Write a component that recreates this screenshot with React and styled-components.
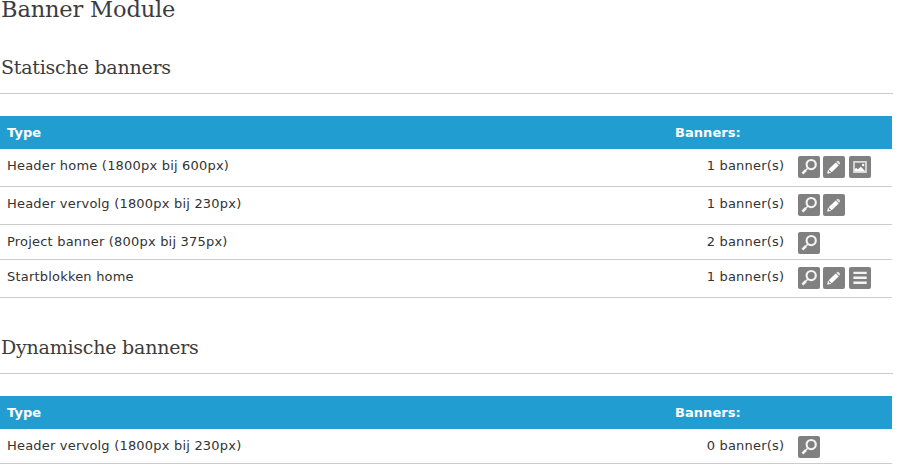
import styled, { createGlobalStyle } from "styled-components";

const GlobalStyle = createGlobalStyle`
  body {
    margin: 0;
    background: #fff;
    color: #333;
    font-family: Verdana, "DejaVu Sans", sans-serif;
    font-size: 13px;
  }
`;

const Page = styled.main`
  width: 893px;
`;

const PageTitle = styled.h1`
  margin: 0;
  padding-left: 1px;
  height: 24px;
  line-height: 18px;
  color: #3c3c3c;
  font-family: "DejaVu Serif", serif;
  font-size: 22.5px;
  font-weight: 400;
  letter-spacing: -0.15px;
`;

const Section = styled.section`
  padding-top: ${(props) => props.$space}px;
`;

const SectionTitle = styled.h2`
  margin: 0 0 22px;
  padding-left: 1px;
  height: 41px;
  line-height: 30px;
  border-bottom: 1px solid #ccc;
  color: #3c3c3c;
  font-family: "DejaVu Serif", serif;
  font-size: 19px;
  font-weight: 400;
  letter-spacing: -0.22px;
`;

const Table = styled.div`
  width: 892px;
`;

const Row = styled.div`
  display: grid;
  grid-template-columns: 668px 130px 1fr;
  box-sizing: border-box;
  height: ${(props) => (props.$compact ? 35 : 38)}px;
  border-bottom: 1px solid #ccc;
  letter-spacing: 0.2px;
`;

const HeadRow = styled(Row)`
  height: 33px;
  border-bottom: 0;
  background: #219dd2;
  color: #fff;
  font-weight: 700;
  letter-spacing: 0.05px;
`;

const Cell = styled.div`
  padding: 7px 0 0 7px;
  line-height: 20px;
`;

const CountCell = styled(Cell)`
  padding: 7px 13.8px 0 0;
  text-align: right;
`;

const Actions = styled.div`
  display: flex;
  padding-top: 7px;
`;

const IconButton = styled.button`
  width: 22px;
  height: 22px;
  margin: 0 ${(props) => (props.$wide ? 4 : 3)}px 0 0;
  padding: 0;
  border: 0;
  border-radius: 2px;
  background: #808080;
  cursor: pointer;

  svg {
    display: block;
  }
`;

const icons = {
  view: (
    <svg width="22" height="22" fill="none" stroke="#f4f4f4">
      <circle cx="13.2" cy="8.6" r="4.6" strokeWidth="2.1" />
      <path d="M9.7 12.3 8 14" strokeWidth="1.5" />
      <path d="m8 14-3.6 3.7" strokeWidth="2.6" />
    </svg>
  ),
  edit: (
    <svg width="22" height="22" fill="#fff">
      <path d="m12.7 6.4 3 3-7 6.9-3.1-3z" />
      <path d="m13.2 5.9 1.1-1c.8-.6 3.2 1.7 2.8 2.7l-1 1.2z" fill="#e4e4e4" />
      <path d="m5 13.8 3.2 3.1-3.3.7c-.6 0-.8-.3-.6-.9z" />
      <path d="m5.8 14.6 1.4 1.4-1.2.2z" fill="#808080" />
    </svg>
  ),
  image: (
    <svg width="22" height="22">
      <rect x="5" y="5.9" width="12" height="10.2" fill="none" stroke="#e4e4e4" strokeWidth="1.6" />
      <path d="M5.5 15.4V13l1.8-1 1.6 1.2 2.9-2.5 4.7 4.7z" fill="#fff" />
      <circle cx="14.2" cy="9" r="1.2" fill="#fff" />
    </svg>
  ),
  list: (
    <svg width="22" height="22" fill="#f4f4f4">
      <path d="M4.4 4.7h13.3v2.4H4.4zM4.4 9.6h13.3V12H4.4zM4.4 14.5h13.3v2.4H4.4z" />
    </svg>
  ),
};

const labels = {
  view: "Bekijken",
  edit: "Bewerken",
  image: "Afbeelding",
  list: "Volgorde",
};

const staticBanners = [
  { type: "Header home (1800px bij 600px)", count: 1, actions: ["view", "edit", "image"] },
  { type: "Header vervolg (1800px bij 230px)", count: 1, actions: ["view", "edit"] },
  { type: "Project banner (800px bij 375px)", count: 2, actions: ["view"] },
  { type: "Startblokken home", count: 1, actions: ["view", "edit", "list"] },
];

const dynamicBanners = [
  { type: "Header vervolg (1800px bij 230px)", count: 0, actions: ["view"] },
];

const BannerTable = ({ banners }) => (
  <Table>
    <HeadRow>
      <Cell>Type</Cell>
      <Cell>Banners:</Cell>
    </HeadRow>
    {banners.map((banner) => (
      <Row key={banner.type} $compact={banner.actions.length === 1}>
        <Cell>{banner.type}</Cell>
        <CountCell>{banner.count} banner(s)</CountCell>
        <Actions>
          {banner.actions.map((action) => (
            <IconButton key={action} $wide={action === "edit"} aria-label={labels[action]}>
              {icons[action]}
            </IconButton>
          ))}
        </Actions>
      </Row>
    ))}
  </Table>
);

const App = () => {
  return (
    <>
      <GlobalStyle />
      <Page>
        <PageTitle>Banner Module</PageTitle>
        <Section $space={28}>
          <SectionTitle>Statische banners</SectionTitle>
          <BannerTable banners={staticBanners} />
        </Section>
        <Section $space={34}>
          <SectionTitle>Dynamische banners</SectionTitle>
          <BannerTable banners={dynamicBanners} />
        </Section>
      </Page>
    </>
  );
};

export default App;
